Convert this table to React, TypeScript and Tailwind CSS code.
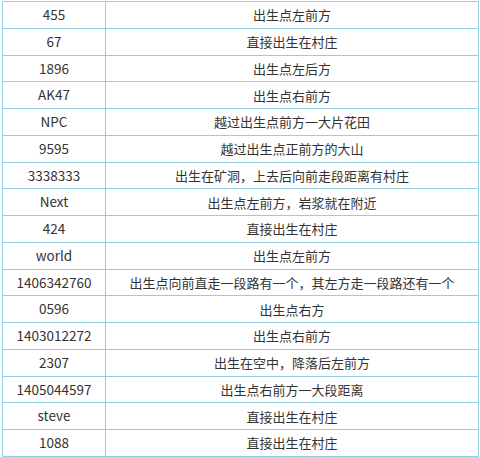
import React from "react";

const rows: [string, string][] = [
  ["455", "出生点左前方"],
  ["67", "直接出生在村庄"],
  ["1896", "出生点左后方"],
  ["AK47", "出生点右前方"],
  ["NPC", "越过出生点前方一大片花田"],
  ["9595", "越过出生点正前方的大山"],
  ["3338333", "出生在矿洞，上去后向前走段距离有村庄"],
  ["Next", "出生点左前方，岩浆就在附近"],
  ["424", "直接出生在村庄"],
  ["world", "出生点左前方"],
  ["1406342760", "出生点向前直走一段路有一个，其左方走一段路还有一个"],
  ["0596", "出生点右方"],
  ["1403012272", "出生点右前方"],
  ["2307", "出生在空中，降落后左前方"],
  ["1405044597", "出生点右前方一大段距离"],
  ["steve", "直接出生在村庄"],
  ["1088", "直接出生在村庄"],
];

export default function App() {
  return (
    <div
      className="w-[480px] h-[457px] overflow-hidden bg-white pl-[2px] pt-[1px]"
      style={{ fontFamily: '"Noto Sans CJK SC", "Noto Sans", sans-serif' }}
    >
      <table className="w-[477px] border-collapse table-fixed text-[13px] text-[#333] leading-none">
        <colgroup>
          <col className="w-[103px]" />
          <col />
        </colgroup>
        <tbody>
          {rows.map(([a, b], i) => (
            <tr key={i} className="h-[26.75px]">
              <td className="border border-[#93cfe0] text-center text-[13.5px] p-0">{a}</td>
              <td className="border border-[#93cfe0] text-center p-0">{b}</td>
            </tr>
          ))}
        </tbody>
      </table>
    </div>
  );
}
